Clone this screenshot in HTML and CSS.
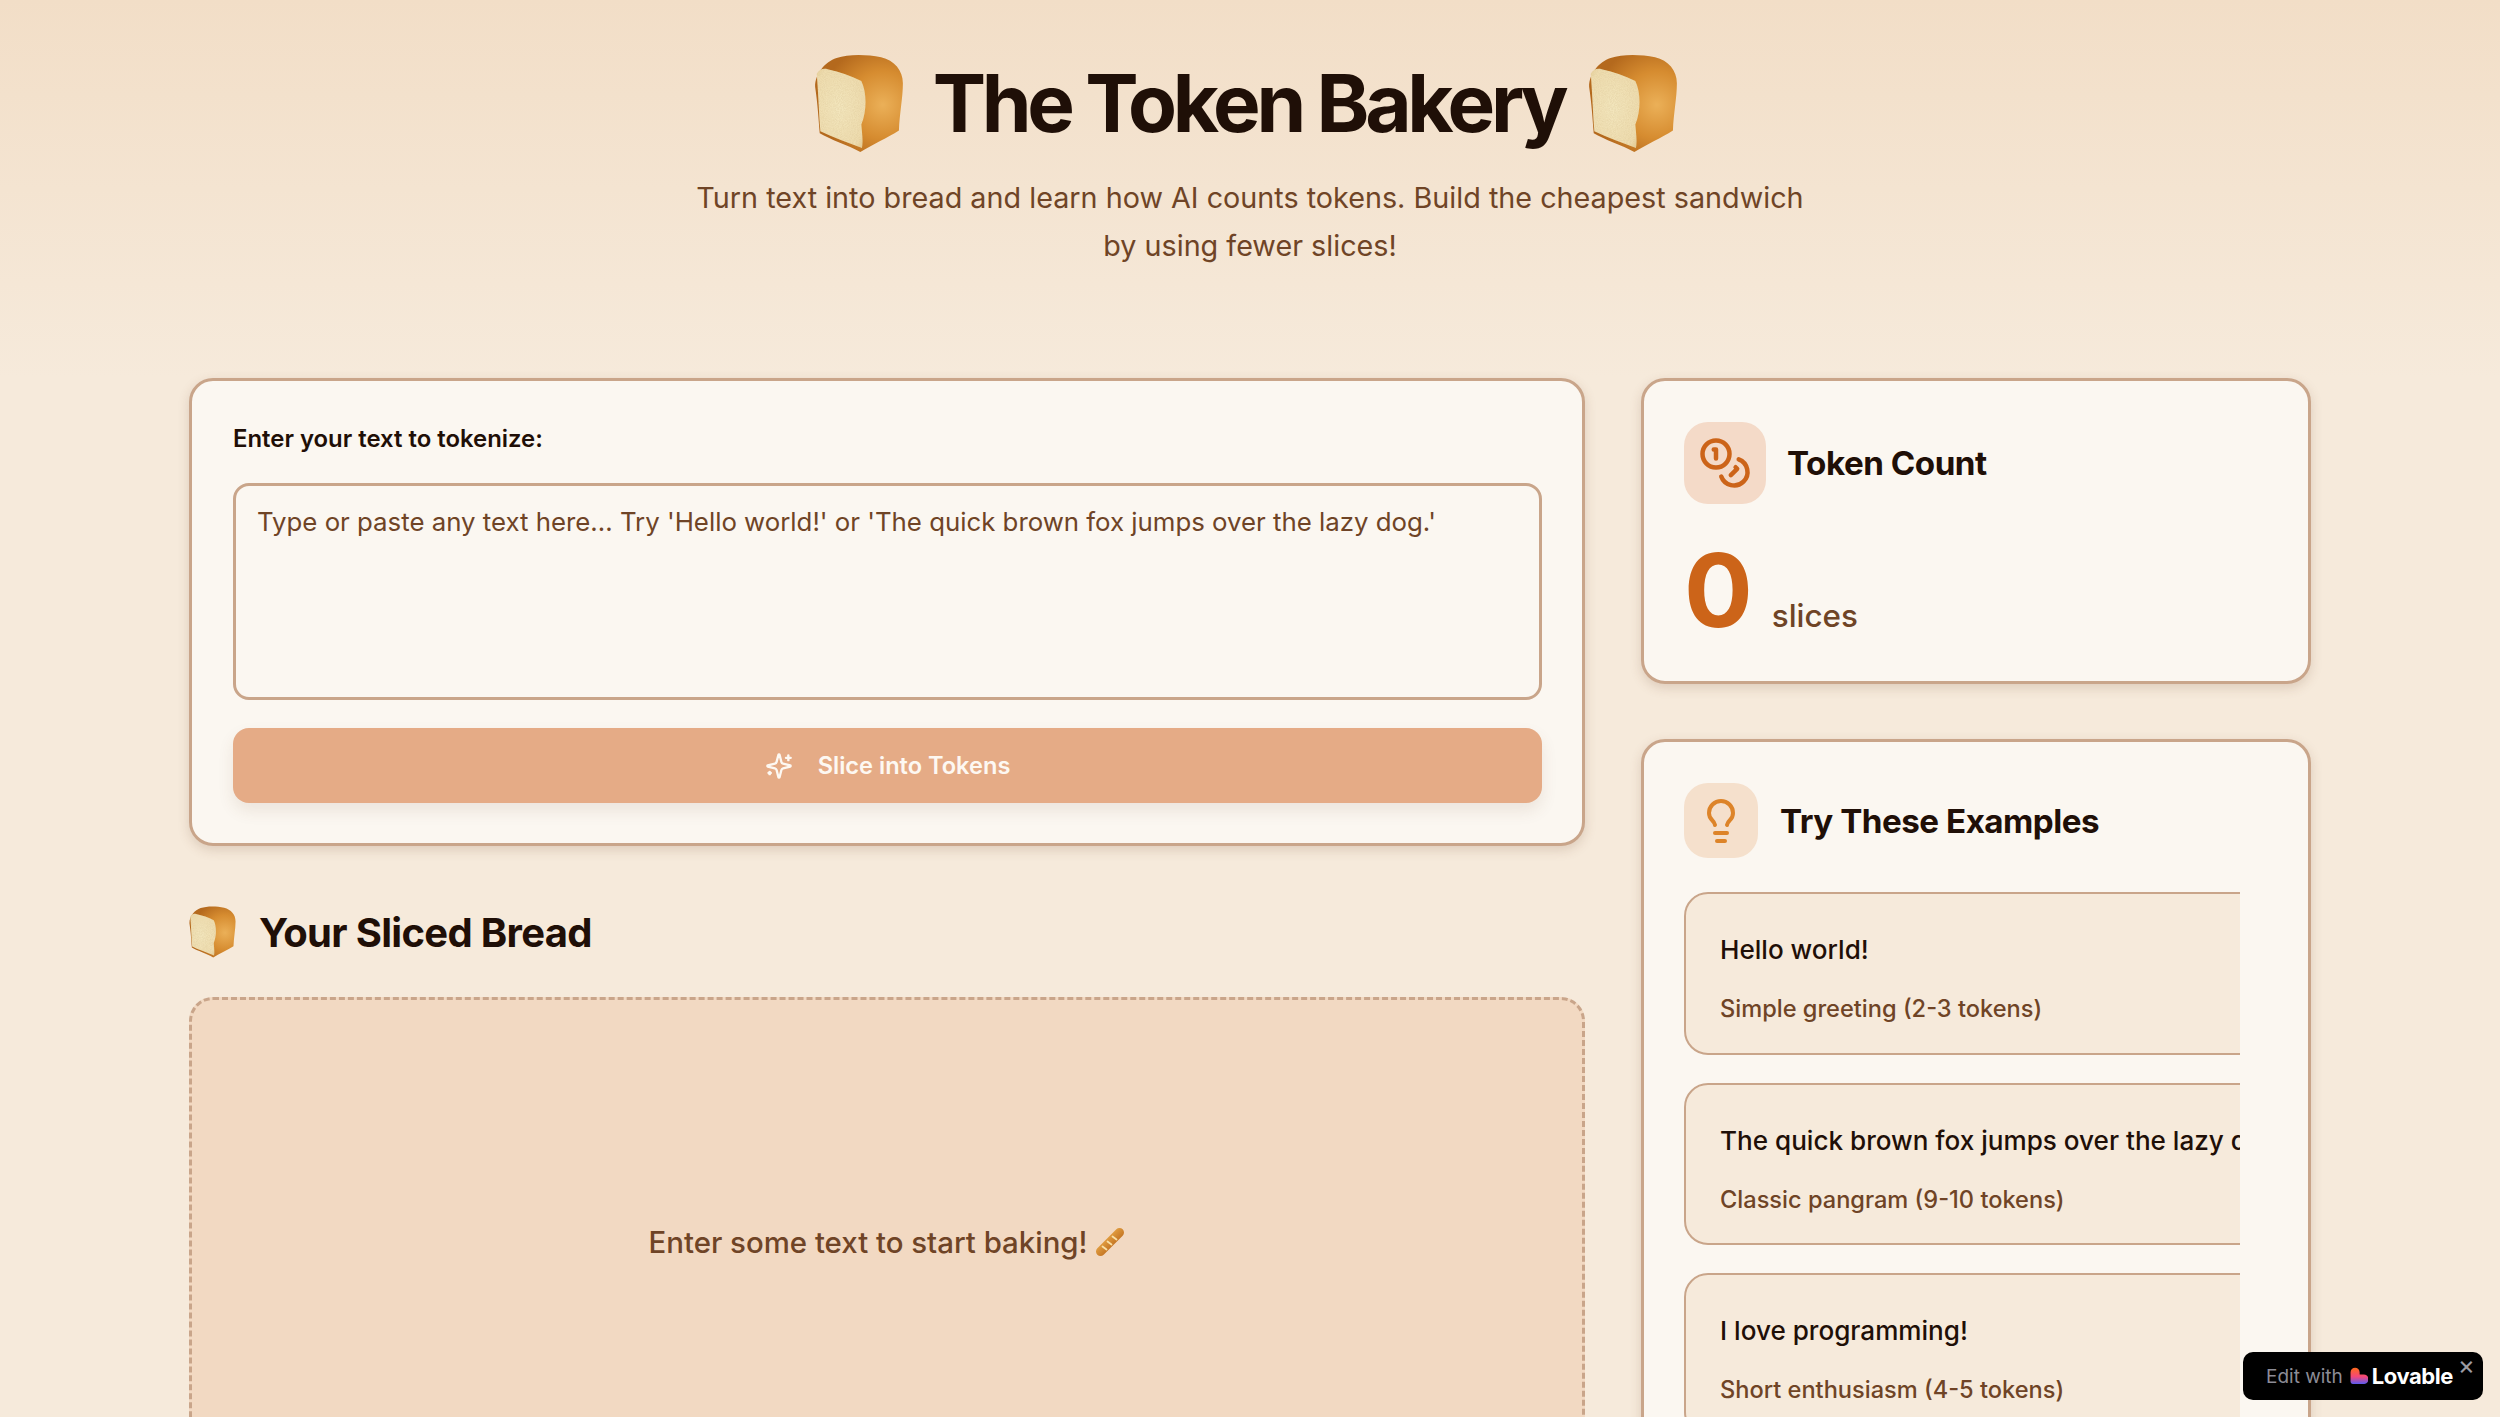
FILE: index.html
```html
<!DOCTYPE html>
<html lang="en">
<head>
<meta charset="utf-8">
<title>The Token Bakery</title>
<link rel="stylesheet" href="styles.css">
</head>
<body>
<svg class="defs" width="0" height="0" aria-hidden="true">
  <defs>
    <radialGradient id="crust" gradientUnits="userSpaceOnUse" cx="255" cy="190" r="185">
      <stop offset="0" stop-color="#ebb058"/>
      <stop offset="0.55" stop-color="#d68c30"/>
      <stop offset="1" stop-color="#b4691d"/>
    </radialGradient>
    <radialGradient id="face" cx="0.45" cy="0.5" r="0.7">
      <stop offset="0" stop-color="#f3e6bd"/>
      <stop offset="0.8" stop-color="#eedcae"/>
      <stop offset="1" stop-color="#e3c88e"/>
    </radialGradient>
    <filter id="crumb" x="0" y="0" width="100%" height="100%">
      <feTurbulence type="fractalNoise" baseFrequency="0.35" numOctaves="2" seed="4"/>
      <feColorMatrix values="0 0 0 0 0.72  0 0 0 0 0.58  0 0 0 0 0.32  0 0 0 0.9 -0.28"/>
      <feComposite in2="SourceGraphic" operator="in"/>
      <feMerge><feMergeNode in="SourceGraphic"/><feMergeNode/></feMerge>
    </filter>
    <symbol id="bread" viewBox="48 36 270 300">
      <path d="M187 333C150 312 95 295 64 276C60 225 58 190 50 135C50 95 80 60 115 48C150 36 205 36 250 46C290 56 316 85 316 125C316 170 306 215 304 268C270 290 225 310 187 333Z" fill="url(#crust)"/>
      <path d="M55 96C62 84 72 78 88 82C125 90 160 102 190 118C206 150 208 205 190 250C192 275 196 300 192 321C150 304 105 290 66 270C62 225 60 160 55 96Z" fill="url(#face)" filter="url(#crumb)"/>
    </symbol>
    <linearGradient id="bag" gradientUnits="userSpaceOnUse" x1="8" y1="8" x2="20" y2="20">
      <stop offset="0" stop-color="#eeb04d"/>
      <stop offset="1" stop-color="#bf6e1f"/>
    </linearGradient>
    <linearGradient id="heart" x1="0" y1="0" x2="0" y2="1">
      <stop offset="0" stop-color="#ff6a1a"/>
      <stop offset="0.55" stop-color="#f5477a"/>
      <stop offset="1" stop-color="#5b5bf0"/>
    </linearGradient>
  </defs>
</svg>

<header class="hero">
  <h1 class="hero-title">
    <svg class="hero-bread" aria-hidden="true"><use href="#bread"/></svg>
    <span>The Token Bakery</span>
    <svg class="hero-bread hero-bread-end" aria-hidden="true"><use href="#bread"/></svg>
  </h1>
  <p class="hero-sub">Turn text into bread and learn how AI counts tokens. Build the cheapest sandwich by using fewer slices!</p>
</header>

<main class="layout">
  <section class="left">
    <div class="card input-card">
      <label class="input-label" for="txt">Enter your text to tokenize:</label>
      <textarea id="txt" class="input-area" placeholder="Type or paste any text here... Try 'Hello world!' or 'The quick brown fox jumps over the lazy dog.'"></textarea>
      <button class="slice-btn" type="button">
        <svg class="slice-icon" viewBox="0 0 24 24" fill="none" stroke="currentColor" stroke-width="2" stroke-linecap="round" stroke-linejoin="round" aria-hidden="true"><path d="M9.937 15.5A2 2 0 0 0 8.5 14.063l-6.135-1.582a.5.5 0 0 1 0-.962L8.5 9.936A2 2 0 0 0 9.937 8.5l1.582-6.135a.5.5 0 0 1 .963 0L14.063 8.5A2 2 0 0 0 15.5 9.937l6.135 1.581a.5.5 0 0 1 0 .964L15.5 14.063a2 2 0 0 0-1.437 1.437l-1.582 6.135a.5.5 0 0 1-.963 0z"/><path d="M20 3v4"/><path d="M22 5h-4"/><path d="M4 17v2"/><path d="M5 18H3"/></svg>
        <span>Slice into Tokens</span>
      </button>
    </div>

    <h2 class="section-title">
      <svg class="section-bread" aria-hidden="true"><use href="#bread"/></svg>
      <span>Your Sliced Bread</span>
    </h2>

    <div class="dropzone">
      <span>Enter some text to start baking!</span>
      <svg class="baguette" viewBox="0 0 30 30" aria-hidden="true">
        <path d="M5.500 24.500L24.500 5.500" stroke="url(#bag)" stroke-width="9" stroke-linecap="round" fill="none"/>
        <path d="M7.500 19.500l4 3M12.500 14.500l4 3M17.500 9.500l4 3" stroke="#f9e0a6" stroke-width="1.800" stroke-linecap="round" fill="none"/>
      </svg>
    </div>
  </section>

  <aside class="right">
    <div class="card count-card">
      <div class="card-head">
        <div class="icon-box icon-box-count">
          <svg class="icon-coins" viewBox="0 0 24 24" fill="none" stroke="currentColor" stroke-width="2" stroke-linecap="round" stroke-linejoin="round" aria-hidden="true"><circle cx="8" cy="8" r="6"/><path d="M18.09 10.37A6 6 0 1 1 10.34 18"/><path d="M7 6h1v4"/><path d="m16.71 13.88.7.71-2.82 2.82"/></svg>
        </div>
        <h3 class="count-title">Token Count</h3>
      </div>
      <div class="count-row">
        <span class="count-num">0</span>
        <span class="count-unit">slices</span>
      </div>
    </div>

    <div class="card examples-card">
      <div class="card-head examples-head">
        <div class="icon-box icon-box-bulb">
          <svg class="icon-bulb" viewBox="0 0 24 24" fill="none" stroke="currentColor" stroke-width="2" stroke-linecap="round" stroke-linejoin="round" aria-hidden="true"><path d="M15 14c.2-1 .7-1.7 1.5-2.5 1-.9 1.5-2.2 1.5-3.5A6 6 0 0 0 6 8c0 1 .2 2.2 1.500 3.500.7.7 1.300 1.500 1.500 2.500"/><path d="M9 18h6"/><path d="M10 22h4"/></svg>
        </div>
        <h3 class="examples-title">Try These Examples</h3>
      </div>
      <div class="examples-list">
        <div class="example">
          <div class="example-text">Hello world!</div>
          <div class="example-desc">Simple greeting (2-3 tokens)</div>
        </div>
        <div class="example">
          <div class="example-text">The quick brown fox jumps over the lazy dog.</div>
          <div class="example-desc">Classic pangram (9-10 tokens)</div>
        </div>
        <div class="example">
          <div class="example-text">I love programming!</div>
          <div class="example-desc">Short enthusiasm (4-5 tokens)</div>
        </div>
      </div>
    </div>
  </aside>
</main>

<div class="badge">
  <span class="badge-edit">Edit with</span>
  <svg class="badge-heart" viewBox="0 0 17 17" aria-hidden="true"><path d="M0.500 5a4.300 4.300 0 0 1 8.600 0v2h3.400a4.500 4.500 0 0 1 1 9H2.500A2 2 0 0 1 0.500 14Z" fill="url(#heart)"/></svg>
  <span class="badge-brand">Lovable</span>
  <span class="badge-close">×</span>
</div>
</body>
</html>
```

FILE: styles.css
```css
* { box-sizing: border-box; }
html, body { height: 100%; }
body {
  margin: 0;
  height: 1417px;
  overflow: hidden;
  font-family: Inter, "Liberation Sans", sans-serif;
  color: #1f0f07;
  background: #f6eadb;
}
.defs { position: absolute; }

.hero {
  height: 378px;
  padding-top: 54px;
  text-align: center;
  background: linear-gradient(180deg, #f2dec7 0%, #f6eadb 100%);
}
.hero-title {
  margin: 0;
  padding-right: 8px;
  display: flex;
  justify-content: center;
  align-items: center;
  gap: 29px;
  height: 98px;
  font-size: 80px;
  font-weight: 700;
  letter-spacing: -0.054em;
  line-height: 98px;
}
.hero-bread { width: 90px; height: 99px; flex: none; }
.hero-bread-end { margin-left: -5px; }
.hero-sub {
  margin: 22px auto 0;
  width: 1130px;
  font-size: 28.75px;
  font-weight: 440;
  line-height: 48px;
  color: #6f4426;
}

.layout {
  margin-left: 189px;
  display: grid;
  grid-template-columns: 1396px 670px;
  column-gap: 56px;
  align-items: start;
}
.card {
  background: #fbf7f1;
  border: 3px solid #c9a58a;
  border-radius: 24px;
  padding: 41px 40px 40px;
  box-shadow: 0 4px 12px rgba(110, 68, 38, 0.18);
}

.input-card { height: 468px; padding-left: 41px; display: flex; flex-direction: column; }
.input-label {
  font-size: 23.9px;
  font-weight: 600;
  line-height: 34px;
  margin-bottom: 27px;
}
.input-area {
  width: 100%;
  height: 217px;
  flex: none;
  padding: 17px 21px;
  border: 3px solid #c9a58a;
  border-radius: 16px;
  background: #fbf7f1;
  font-family: inherit;
  font-size: 25.8px;
  font-weight: 440;
  line-height: 38px;
  resize: none;
  outline: none;
}
.input-area::placeholder { color: #6f4426; opacity: 1; }
.slice-btn {
  margin-top: 28px;
  height: 75px;
  width: 100%;
  flex: none;
  border: 0;
  border-radius: 16px;
  background: #e5ab86;
  color: #fdf8f2;
  display: flex;
  align-items: center;
  justify-content: center;
  gap: 25px;
  font-family: inherit;
  font-size: 23.6px;
  font-weight: 600;
  box-shadow: 0 8px 16px rgba(110, 68, 38, 0.1);
}
.slice-icon { width: 28px; height: 28px; flex: none; }

.section-title {
  margin: 58px 0 37px;
  height: 56px;
  display: flex;
  align-items: center;
  gap: 23px;
  font-size: 40px;
  font-weight: 700;
  letter-spacing: -0.017em;
}
.section-bread { width: 47px; height: 52px; flex: none; }

.dropzone {
  height: 490px;
  border: 3px dashed #c9a58a;
  border-radius: 24px;
  background: #f2d9c2;
  display: flex;
  align-items: center;
  justify-content: center;
  gap: 8px;
  font-size: 29.4px;
  font-weight: 500;
  color: #6f4426;
}
.baguette { width: 30px; height: 30px; flex: none; }

.count-card { height: 306px; }
.card-head { display: flex; align-items: center; }
.icon-box {
  flex: none;
  display: flex;
  align-items: center;
  justify-content: center;
  background: #f4dac8;
  border-radius: 24px;
}
.icon-box-count { width: 82px; height: 82px; color: #cc6419; }
.icon-coins { width: 54px; height: 54px; }
.count-title {
  margin: 0 0 0 21px;
  font-size: 33.2px;
  font-weight: 700;
  letter-spacing: -0.015em;
}
.count-row { display: flex; align-items: baseline; gap: 19px; margin-top: 25px; }
.count-num {
  font-size: 102px;
  line-height: 122px;
  font-weight: 700;
  color: #cc6419;
}
.count-unit { font-size: 31.4px; font-weight: 500; color: #6f4426; }

.examples-card {
  margin-top: 55px;
  height: 760px;
}
.icon-box-bulb { width: 74px; height: 75px; background: #f5e0cc; color: #dd8429; }
.icon-bulb { width: 48px; height: 48px; }
.examples-title {
  margin: 0 0 0 22px;
  font-size: 33.2px;
  font-weight: 700;
  letter-spacing: -0.015em;
}
.examples-list {
  width: 556px;
  margin-top: 34px;
  display: flex;
  flex-direction: column;
  gap: 28px;
  overflow: hidden;
}
.example {
  width: 800px;
  height: 162.5px;
  flex: none;
  padding: 36px 34px 0;
  background: #f6eadb;
  border: 2px solid #c9a58a;
  border-radius: 24px;
}
.example-text { font-size: 26.1px; font-weight: 500; line-height: 40px; white-space: nowrap; }
.example-desc { margin-top: 22px; font-size: 23.6px; font-weight: 500; line-height: 34px; color: #6f4426; }

.badge {
  position: absolute;
  left: 2243px;
  top: 1352px;
  width: 240px;
  height: 48px;
  padding-left: 23px;
  display: flex;
  align-items: center;
  background: #000;
  border-radius: 10px;
}
.badge-edit { font-size: 19px; color: #8c8c96; white-space: nowrap; }
.badge-heart { width: 18px; height: 18px; margin-left: 7px; flex: none; }
.badge-brand { margin-left: 4px; font-size: 22px; font-weight: 700; color: #fff; letter-spacing: -0.02em; }
.badge-close { position: absolute; right: 8px; top: -2px; font-size: 26px; line-height: 30px; color: #9a9aa2; }
```
